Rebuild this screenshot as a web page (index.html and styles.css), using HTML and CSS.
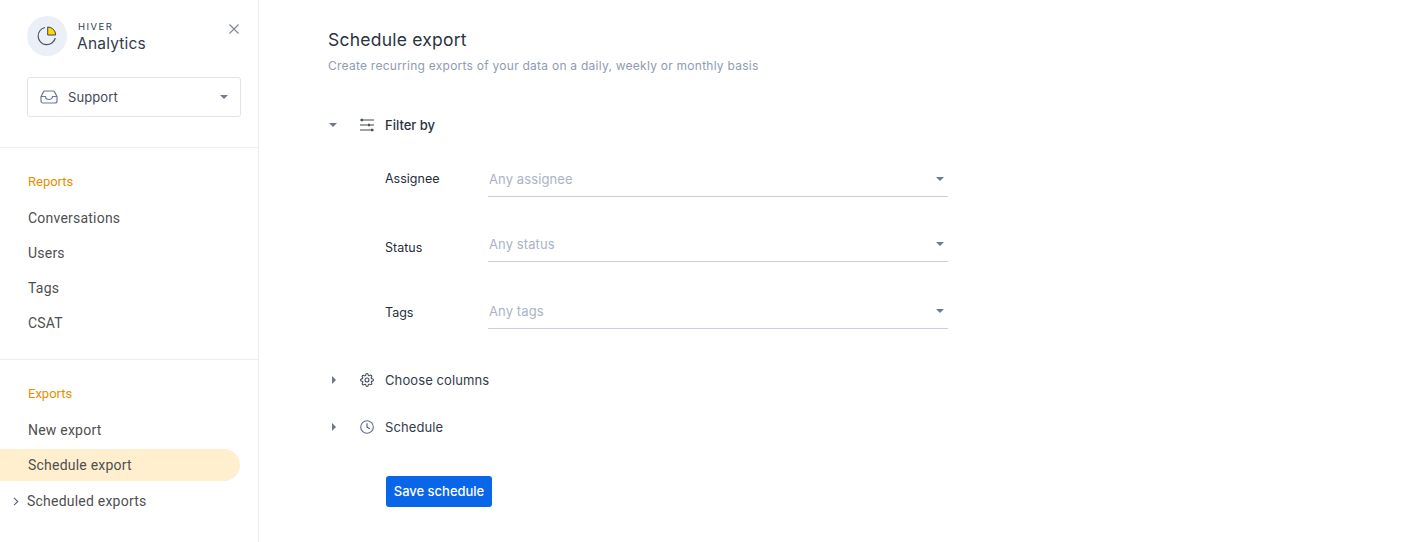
FILE: index.html
```html
<!DOCTYPE html>
<html lang="en">
<head>
<meta charset="utf-8">
<title>Schedule export</title>
<link rel="stylesheet" href="styles.css">
</head>
<body>
<div class="app">
  <aside class="sidebar">
    <div class="brand">
      <div class="logo">
        <svg width="20" height="20" viewBox="0 0 20 20"><path d="M8 1.5A8.7 8.7 0 1 0 18.3 12" fill="none" stroke="#4a5468" stroke-width="1.2"/><path d="M10.7 1a8 8 0 0 1 8 8h-8z" fill="#ffd800" stroke="#3c4658" stroke-width="1"/></svg>
      </div>
      <div class="brand-text">
        <div class="brand-sup">HIVER</div>
        <div class="brand-name">Analytics</div>
      </div>
      <svg class="close" width="10" height="10" viewBox="0 0 10 10"><path d="M.5.5l9 9M9.5.5l-9 9" stroke="#7d8594" stroke-width="1.1" fill="none"/></svg>
    </div>
    <div class="select-box">
      <svg width="18" height="14" viewBox="0 0 18 14"><path d="M1 6.5 3.6 1.6A1.5 1.5 0 0 1 5 1h8a1.5 1.5 0 0 1 1.4.6L17 6.5V11a2 2 0 0 1-2 2H3a2 2 0 0 1-2-2z M1 6.5h4.5a3.5 3 0 0 0 7 0H17" fill="none" stroke="#6b7a99" stroke-width="1.2"/></svg>
      <span class="select-label">Support</span>
      <span class="caret caret-dark"></span>
    </div>
    <nav class="section section-first">
      <div class="section-title">Reports</div>
      <a class="item">Conversations</a>
      <a class="item">Users</a>
      <a class="item">Tags</a>
      <a class="item">CSAT</a>
    </nav>
    <nav class="section">
      <div class="section-title">Exports</div>
      <a class="item">New export</a>
      <a class="item item-active">Schedule export</a>
      <a class="item item-sub">
        <svg width="6" height="9" viewBox="0 0 6 9"><path d="M1 .8 4.8 4.5 1 8.2" fill="none" stroke="#4f6288" stroke-width="1.1"/></svg>
        <span>Scheduled exports</span>
      </a>
    </nav>
  </aside>
  <main class="main">
    <h1 class="title">Schedule export</h1>
    <p class="subtitle">Create recurring exports of your data on a daily, weekly or monthly basis</p>

    <div class="acc-head acc-filter">
      <span class="caret caret-small"></span>
      <svg class="acc-icon" width="16" height="14" viewBox="0 0 16 14"><path d="M1 2h14M1 7h14M1 12h14" stroke="#3f4859" stroke-width="1.1" fill="none"/><path d="M3 .7v2.6M10 5.7v2.6M13 10.7v2.6" stroke="#3f4859" stroke-width="1.8" fill="none"/></svg>
      <span class="acc-label acc-strong">Filter by</span>
    </div>

    <div class="filters">
      <div class="filter-row row-a">
        <label class="filter-label">Assignee</label>
        <div class="field"><span class="placeholder">Any assignee</span><span class="caret caret-dark"></span></div>
      </div>
      <div class="filter-row row-b">
        <label class="filter-label">Status</label>
        <div class="field"><span class="placeholder">Any status</span><span class="caret caret-dark"></span></div>
      </div>
      <div class="filter-row row-c">
        <label class="filter-label">Tags</label>
        <div class="field"><span class="placeholder">Any tags</span><span class="caret caret-dark"></span></div>
      </div>
    </div>

    <div class="acc-head acc-columns">
      <span class="caret-right"></span>
      <svg class="acc-icon" width="14" height="14" viewBox="0 0 24 24"><circle cx="12" cy="12" r="3.4" fill="none" stroke="#3f4859" stroke-width="1.8"/><path d="M19.4 15a1.65 1.65 0 0 0 .33 1.82l.06.06a2 2 0 1 1-2.83 2.83l-.06-.06a1.65 1.65 0 0 0-2.8 1.17V21a2 2 0 1 1-4 0v-.09a1.65 1.65 0 0 0-2.82-1.2l-.06.06a2 2 0 1 1-2.83-2.83l.06-.06a1.65 1.65 0 0 0-1.17-2.8H3a2 2 0 1 1 0-4h.09a1.65 1.65 0 0 0 1.2-2.82l-.06-.06a2 2 0 1 1 2.83-2.83l.06.06a1.65 1.65 0 0 0 2.8-1.17V3a2 2 0 1 1 4 0v.09a1.65 1.65 0 0 0 2.82 1.2l.06-.06a2 2 0 1 1 2.83 2.83l-.06.06a1.65 1.65 0 0 0 1.17 2.8H21a2 2 0 1 1 0 4h-.09a1.65 1.65 0 0 0-1.51 1.08z" fill="none" stroke="#3f4859" stroke-width="1.8"/></svg>
      <span class="acc-label">Choose columns</span>
    </div>
    <div class="acc-head acc-schedule">
      <span class="caret-right"></span>
      <svg class="acc-icon" width="14" height="14" viewBox="0 0 14 14"><circle cx="7" cy="7" r="6.3" fill="none" stroke="#5d6f92" stroke-width="1.1"/><path d="M7 3.2V7.2L9.8 8.8" fill="none" stroke="#4a5468" stroke-width="1.1"/></svg>
      <span class="acc-label">Schedule</span>
    </div>
    <button class="save" type="button">Save schedule</button>
  </main>
</div>
</body>
</html>
```
FILE: styles.css
```css
* { box-sizing: border-box; }
html, body { margin: 0; height: 100%; background: #fff; }
body { font-family: Inter, "Liberation Sans", sans-serif; overflow: hidden; }
.app { display: flex; height: 542px; }

.sidebar { width: 259px; flex: none; border-right: 1px solid #e9ecf3; display: flex; flex-direction: column; }
.brand { display: flex; align-items: flex-start; padding: 16px 0 0 27px; height: 77px; }
.logo { width: 40px; height: 40px; border-radius: 50%; background: #ebeff8; display: flex; align-items: center; justify-content: center; flex: none; }
.brand-text { margin-left: 10px; color: #333c4e; }
.brand-sup { font-size: 9.5px; line-height: 12px; letter-spacing: 1.45px; margin: 5px 0 0 1px; }
.brand-name { font-size: 15.5px; line-height: 20px; letter-spacing: .2px; margin-top: 1px; }
.close { margin: 8px 19px 0 auto; }
.select-box { margin-left: 27px; width: 214px; height: 40px; border: 1px solid #dfe3ec; border-radius: 3px; display: flex; align-items: center; padding: 0 12px; color: #3f4859; font-size: 13px; }
.select-label { margin-left: 10px; flex: 1; letter-spacing: .1px; }

.caret { width: 0; height: 0; border-left: 4.5px solid transparent; border-right: 4.5px solid transparent; border-top: 4px solid #6b7a99; display: block; }
.caret-small { border-top-color: #6d7785; }
.caret-right { width: 0; height: 0; border-top: 4px solid transparent; border-bottom: 4px solid transparent; border-left: 4.5px solid #6d7785; display: block; }

.section { border-top: 1px solid #eceef3; display: flex; flex-direction: column; font-family: Roboto, sans-serif; }
.section-first { margin-top: 30px; height: 212px; padding-top: 26px; }
.section-title { color: #e58f00; font-size: 13px; line-height: 16px; padding-left: 28px; margin-bottom: 12px; }
.item { display: flex; align-items: center; height: 32px; margin-bottom: 3px; padding-left: 28px; font-size: 14px; letter-spacing: .22px; color: #4f4f4f; width: 240px; }
.item-active { background: #ffefcf; border-radius: 0 16px 16px 0; }
.item-sub { padding-left: 13px; gap: 8px; margin-top: 1px; }
.section + .section { padding-top: 26px; }

.main { flex: 1; padding: 0 0 0 69px; display: flex; flex-direction: column; align-items: flex-start; }
.title { font-weight: 400; font-size: 17.5px; line-height: 24px; letter-spacing: .23px; color: #2b3343; margin: 28px 0 0; }
.subtitle { font-size: 12px; line-height: 16px; color: #8f9bb3; margin: 6px 0 0; letter-spacing: .25px; }

.acc-head { display: flex; align-items: center; height: 20px; }
.acc-head .caret-small, .acc-head .caret-right { flex: none; }
.acc-head .caret-small { margin: 0 22px 0 1px; }
.acc-head .caret-right { margin: 0 24px 0 4px; }
.acc-icon { flex: none; }
.acc-label { margin-left: 11px; font-size: 13px; color: #333b4b; letter-spacing: .1px; }
.acc-strong { color: #2a3242; font-weight: 500; letter-spacing: 0; margin-left: 10px; }
.acc-filter { margin-top: 41px; }
.acc-schedule { margin-top: 27px; }

.filters { display: flex; flex-direction: column; padding-left: 57px; margin-bottom: 41px; }
.filter-row { display: flex; align-items: flex-start; }
.filter-label { width: 103px; margin-top: 1px; font-size: 12.5px; line-height: 16px; color: #262e3d; }
.field { width: 460px; height: 36px; border-bottom: 1px solid #c9d0dc; display: flex; align-items: center; justify-content: space-between; padding: 0 4px 0 1px; font-size: 13px; color: #aab3c5; }
.placeholder { letter-spacing: .1px; }
.row-a { margin-top: 35px; }
.row-a .field { margin-top: -9px; }
.row-b { margin-top: 42px; }
.row-b .field { margin-top: -13px; }
.row-c { margin-top: 42px; }
.row-c .field { margin-top: -11px; }

.save { margin: 39px 0 0 58px; width: 106px; height: 31px; border: 0; border-radius: 3px; background: #0a66e8; color: #fff; font-family: Inter, sans-serif; font-size: 13px; font-weight: 500; letter-spacing: -.02px; padding: 0 0 2px; }
```
